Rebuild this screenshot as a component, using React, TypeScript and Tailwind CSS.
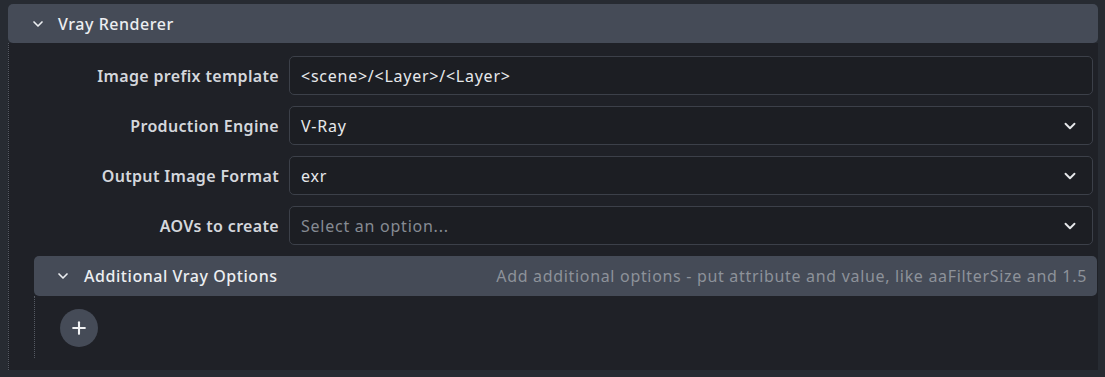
import { ChevronDown, Plus } from 'lucide-react';

type Field = {
  label: string;
  value?: string;
  placeholder?: string;
  select?: boolean;
};

const fields: Field[] = [
  { label: 'Image prefix template', value: '<scene>/<Layer>/<Layer>' },
  { label: 'Production Engine', value: 'V-Ray', select: true },
  { label: 'Output Image Format', value: 'exr', select: true },
  { label: 'AOVs to create', placeholder: 'Select an option...', select: true },
];

function FieldRow({ field }: { field: Field }) {
  return (
    <div className="flex h-[39px] items-center">
      <label className="w-[280px] shrink-0 pr-[10px] text-right text-[16px] font-semibold tracking-[0.33px] text-[#d4d7dc]">
        {field.label}
      </label>
      <div className="mr-[5px] flex h-full flex-1 items-center rounded-[5px] border border-[#3c4049] bg-[#1c1e23] pl-[11px] pr-[13px]">
        <span
          className={`flex-1 text-[16px] tracking-[0.75px] ${
            field.value ? 'text-[#e6e8eb]' : 'text-[#868b93]'
          }`}
        >
          {field.value ?? field.placeholder}
        </span>
        {field.select && (
          <ChevronDown size={18} strokeWidth={2.5} className="text-[#e6e8eb]" />
        )}
      </div>
    </div>
  );
}

export default function App() {
  return (
    <div className="min-h-screen bg-[#272b32] pl-2 pr-[7px] pt-1 font-['Noto_Sans',sans-serif]">
      <div className="flex flex-col">
        <div className="flex h-[39px] items-center rounded-[5px] bg-[#454b57] pl-[22px]">
          <ChevronDown size={16} strokeWidth={2.5} className="text-[#eceef1]" />
          <span className="ml-[12px] text-[16px] font-medium tracking-[0.55px] text-[#eceef1]">
            Vray Renderer
          </span>
        </div>

        <div className="flex h-[327px] flex-col border-l border-dotted border-[#555a63] bg-[#1f2127] pt-[13px]">
          <div className="flex flex-col gap-[11px]">
            {fields.map((f) => (
              <FieldRow key={f.label} field={f} />
            ))}
          </div>

          <div className="ml-[25px] mr-[1px] mt-[11px] flex flex-col">
            <div className="flex h-[40px] items-center rounded-[5px] bg-[#454b57] pl-[21px] pr-[10px]">
              <ChevronDown size={16} strokeWidth={2.5} className="text-[#eceef1]" />
              <span className="ml-[13px] text-[16px] font-medium tracking-[0.55px] text-[#eceef1]">
                Additional Vray Options
              </span>
              <span className="ml-auto text-[16px] tracking-[0.68px] text-[#8d929a]">
                Add additional options - put attribute and value, like aaFilterSize and 1.5
              </span>
            </div>
            <div className="h-[62px] border-l border-dotted border-[#555a63] pl-[25px] pt-[13px]">
              <button className="flex h-[38px] w-[38px] items-center justify-center rounded-full bg-[#454b57] text-[#f1f2f4]">
                <Plus size={20} strokeWidth={2.5} />
              </button>
            </div>
          </div>
        </div>
      </div>
    </div>
  );
}
